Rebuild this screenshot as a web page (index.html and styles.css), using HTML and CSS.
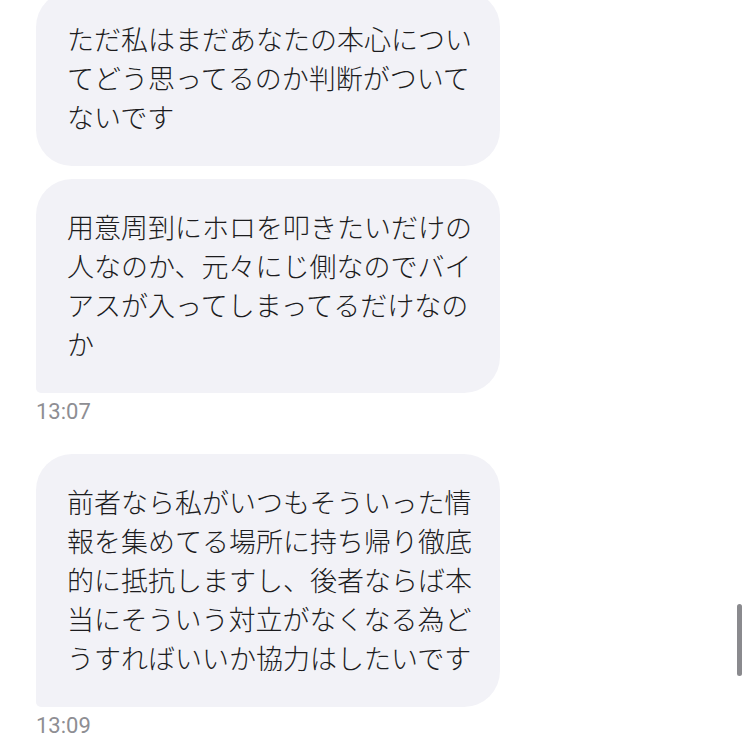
FILE: index.html
```html
<!DOCTYPE html>
<html lang="ja">
<head>
<meta charset="utf-8">
<link rel="stylesheet" href="styles.css">
</head>
<body>
<div class="chat">
  <div class="bubble first">ただ私はまだあなたの本心につい<br>てどう思ってるのか判断がついて<br>ないです</div>
  <div class="bubble tail">用意周到にホロを叩きたいだけの<br>人なのか、元々にじ側なのでバイ<br>アスが入ってしまってるだけなの<br>か</div>
  <div class="time">13:07</div>
  <div class="bubble tail">前者なら私がいつもそういった情<br>報を集めてる場所に持ち帰り徹底<br>的に抵抗しますし、後者ならば本<br>当にそういう対立がなくなる為ど<br>うすればいいか協力はしたいです</div>
  <div class="time">13:09</div>
</div>
<div class="scrollbar"></div>
</body>
</html>
```
FILE: styles.css
```css
html, body {
  margin: 0;
  padding: 0;
  background: #ffffff;
  overflow: hidden;
  height: 748px;
}
.chat {
  display: flex;
  flex-direction: column;
  align-items: flex-start;
  padding-left: 36px;
}
.bubble {
  box-sizing: border-box;
  width: 464px;
  padding: 28px 20px 30px 31px;
  background: #f2f2f7;
  border-radius: 36px;
  font-family: "Noto Sans CJK JP", sans-serif;
  font-size: 27px;
  font-weight: 300;
  line-height: 39px;
  color: #1c1c1e;
  white-space: nowrap;
  margin-bottom: 13px;
}
.bubble.first {
  margin-top: -9px;
}
.bubble.tail {
  border-bottom-left-radius: 5px;
  margin-bottom: 6px;
}
.time {
  font-family: Roboto, "Liberation Sans", sans-serif;
  font-size: 22px;
  line-height: 26px;
  color: #8e8e93;
  margin-bottom: 29px;
}
.scrollbar {
  position: fixed;
  left: 737px;
  top: 604px;
  width: 5px;
  height: 72px;
  border-radius: 3px;
  background: #8a8a8e;
}
```
